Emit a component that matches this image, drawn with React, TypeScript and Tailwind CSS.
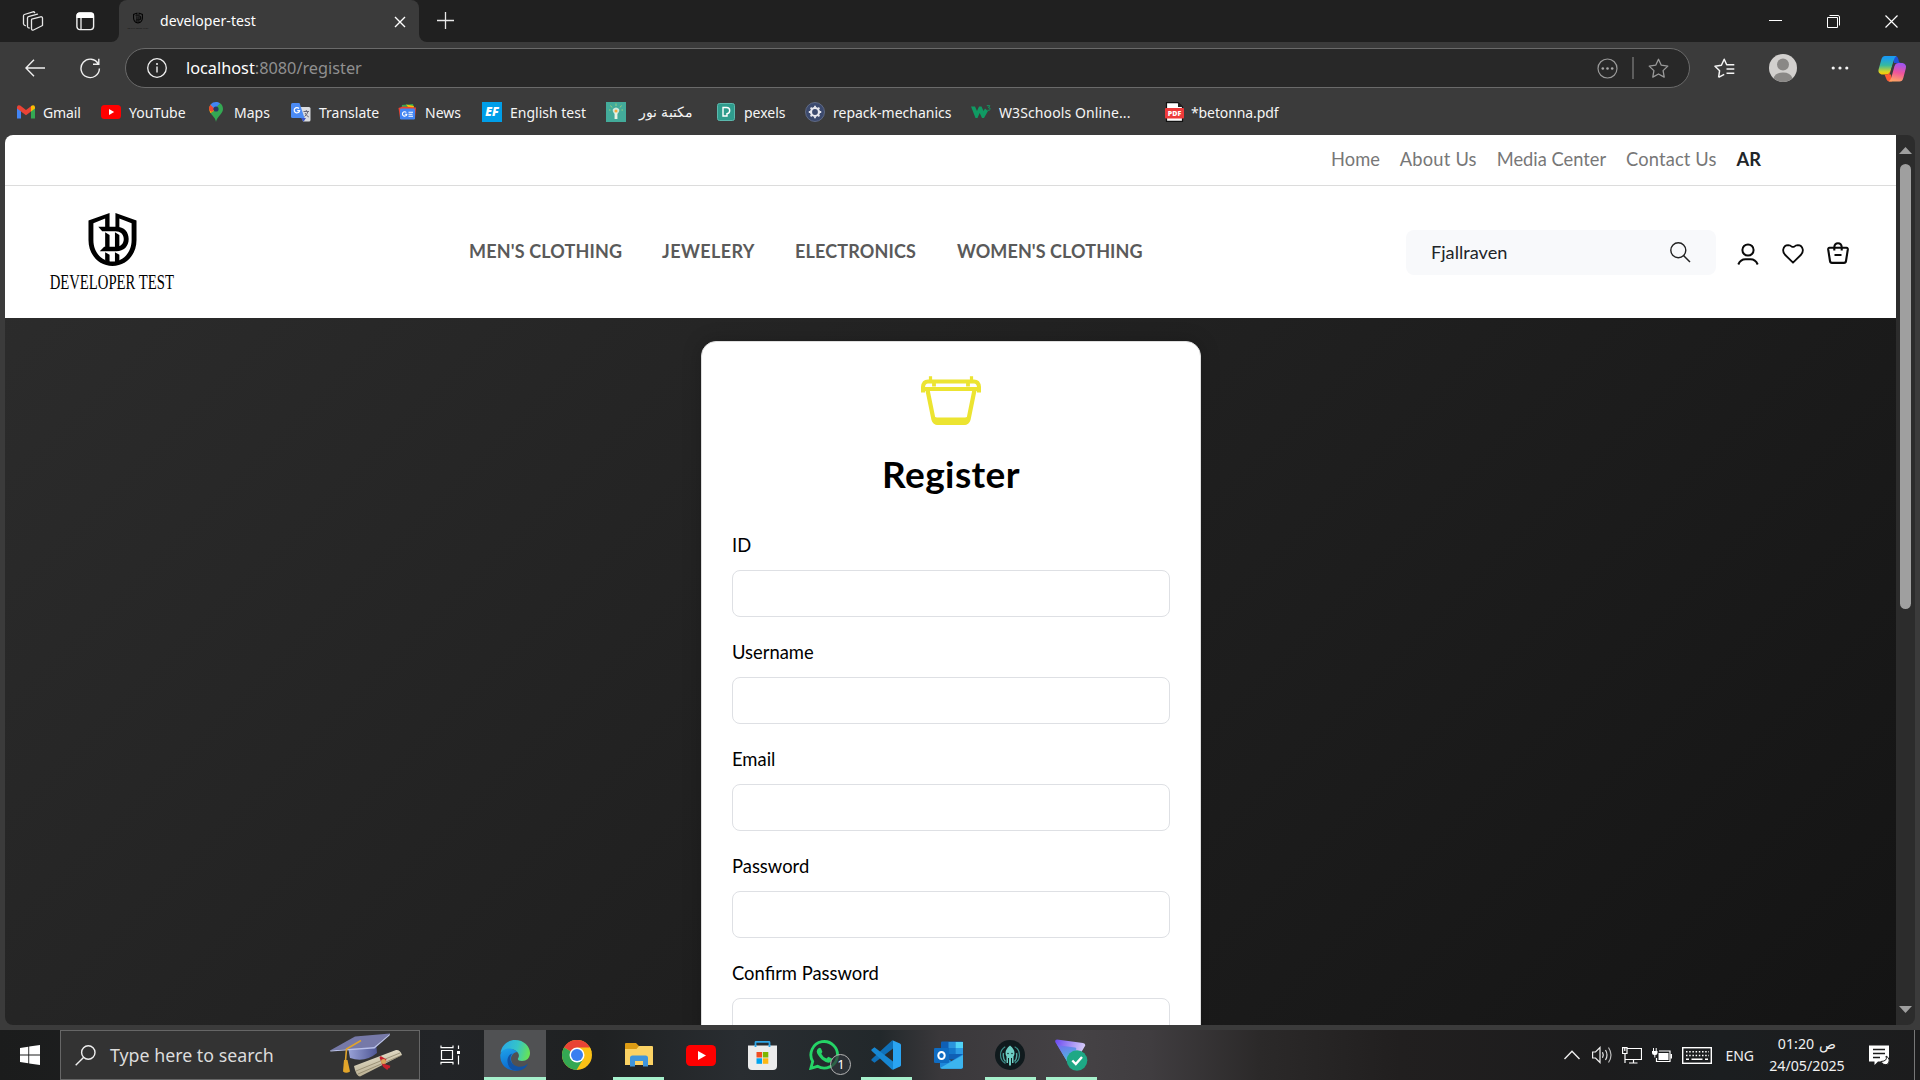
import type { ReactNode } from "react";

function Svg({ w, h, vb, className = "", children }: { w: number; h: number; vb?: string; className?: string; children: ReactNode }) {
  return (
    <svg width={w} height={h} viewBox={vb ?? `0 0 ${w} ${h}`} fill="none" className={`shrink-0 ${className}`}>
      {children}
    </svg>
  );
}

/* ---------- Browser tab strip ---------- */

function Shield({ w, h }: { w: number; h: number }) {
  return (
    <Svg w={w} h={h} vb="0 0 50 55">
      <path d="M22 0.5 L0.5 8 V28 C0.5 43 11 54.5 25 54.5 C39 54.5 49.5 43 49.5 28 V8 L28 0.5 V15 H32 V6 L44.5 11 V28 C44.5 40.5 36 50 25 50 C14 50 5.500 40.500 5.500 28 V11 L17.500 6 V15 H22 Z" fill="#000" />
      <path d="M10.500 14.500 H29 C37 14.500 41.500 20 41.500 27 C41.500 34.500 36.500 39.500 29 39.500 H12 L16.500 35 H28 C33 35 36.500 32 36.500 27 C36.500 22 33 19 28 19 H14.500 Z" fill="#000" />
      <path d="M17.500 20 L22 23 V36 H17.500 Z M27.500 20 L32 23 V36 H27.500 Z M17.500 40.500 L22 43 V51 L17.500 49 Z M27.500 40.500 L32 43 V49.500 L27.500 51 Z" fill="#000" />
    </Svg>
  );
}

function TabStrip() {
  return (
    <div className="flex h-[42px] shrink-0 bg-[#3b3b3b] text-white">
      <div className="flex w-[119px] items-center rounded-br-lg bg-[#202020] pl-[22px]">
        <Svg w={22} h={22} className="mr-[32px]">
          <g stroke="#e6e6e6" strokeWidth="1.3" strokeLinejoin="round" strokeLinecap="round">
            <path d="M9.800 9.200 L18.500 6.800 Q20.500 6.500 20.500 8.200 V15.500 L11.500 20 Q9.600 20.600 9.500 18.800 V10 Q9.500 9.300 9.800 9.200Z" />
            <path d="M7.200 18 Q5.600 18 5.500 16.500 V8 Q5.500 7 6.400 6.700 L15.500 4.200" />
            <path d="M3.300 15.600 Q1.600 15.300 1.500 13.800 V5.800 Q1.500 4.800 2.400 4.500 L11 1.800 Q12.300 1.600 12.700 2.700" />
          </g>
        </Svg>
        <Svg w={19} h={19}>
          <rect x="0.900" y="0.900" width="16.700" height="16.700" rx="3" stroke="#f0f0f0" strokeWidth="1.400" />
          <path d="M0.500 6 V3.500 Q0.500 0.500 3.500 0.500 H15 Q18 0.500 18 3.500 V6Z" fill="#fff" />
          <path d="M5 6 V17.500" stroke="#f0f0f0" strokeWidth="1.300" />
        </Svg>
      </div>
      <div className="w-[300px] bg-[#202020]">
        <div className="flex h-full items-center rounded-t-lg bg-[#3b3b3b] pl-[9px] pr-[13px]">
          <div className="flex w-[20px] flex-col items-center gap-[2px]">
            <Shield w={10} h={14} />
            <span className="whitespace-nowrap font-['Liberation_Serif'] text-[2.500px] leading-[4px] text-black">DEVELOPER TEST</span>
          </div>
          <span className="ml-[12px] flex-1 font-['Noto_Sans'] text-[14px] leading-[18px] tracking-[0.080px]">developer-test</span>
          <Svg w={12} h={12} className="mt-[1px]">
            <path d="M1 1 L11 11 M11 1 L1 11" stroke="#fff" strokeWidth="1.400" />
          </Svg>
        </div>
      </div>
      <div className="flex flex-1 rounded-bl-lg bg-[#202020]">
        <Svg w={18} h={18} className="ml-[18px] mt-[12px]">
          <path d="M8.500 0 V17 M0 8.500 H17" stroke="#e8e8e8" strokeWidth="1.300" />
        </Svg>
        <div className="ml-auto flex items-start pr-[22px] pt-[15px]">
          <Svg w={13} h={13}>
            <path d="M0 5.500 H13" stroke="#fff" />
          </Svg>
          <Svg w={14} h={14} className="ml-[45px]">
            <path d="M0.500 2.500 H10.500 V12.500 H0.500Z" stroke="#fff" />
            <path d="M2.500 0.500 H11 Q12.500 0.500 12.500 2 V10.500" stroke="#fff" />
          </Svg>
          <Svg w={13} h={13} className="ml-[44px]">
            <path d="M0.500 0.500 L12.500 12.500 M12.500 0.500 L0.500 12.500" stroke="#fff" strokeWidth="1.200" />
          </Svg>
        </div>
      </div>
    </div>
  );
}

/* ---------- Address bar ---------- */

function Toolbar() {
  return (
    <div className="flex h-[52px] shrink-0 items-center bg-[#3b3b3b]">
      <Svg w={20} h={18} className="ml-[25px]">
        <path d="M9 0.800 L0.900 9 L9 17.200 M1 9 H20" stroke="#f0f0f0" strokeWidth="1.400" />
      </Svg>
      <Svg w={21} h={21} className="ml-[35px]">
        <path d="M18.300 6 A9.200 9.200 0 1 0 19.400 10.500 M18.800 0.800 V6.300 H13" stroke="#f0f0f0" strokeWidth="1.400" />
      </Svg>
      <div className="ml-[24px] flex h-[40px] w-[1565px] items-center rounded-full border border-[#6a6a6a] bg-[#282828]">
        <Svg w={20} h={20} className="ml-[21px]">
          <circle cx="10" cy="10" r="9.300" stroke="#f0f0f0" strokeWidth="1.300" />
          <path d="M10 8.500 V14.500" stroke="#f0f0f0" strokeWidth="1.400" />
          <circle cx="10" cy="6" r="1" fill="#f0f0f0" />
        </Svg>
        <span className="ml-[19px] flex-1 font-['Noto_Sans'] text-[16.300px] text-[#909090]">
          <span className="text-white">localhost</span>:8080/register
        </span>
        <Svg w={21} h={21}>
          <circle cx="10.500" cy="10.500" r="9.500" stroke="#9a9a9a" strokeWidth="1.200" />
          <g fill="#a8a8a8">
            <circle cx="5.800" cy="10.500" r="1.300" />
            <circle cx="10.500" cy="10.500" r="1.300" />
            <circle cx="15.200" cy="10.500" r="1.300" />
          </g>
        </Svg>
        <div className="ml-[14px] h-[22px] w-[2px] bg-[#5d5d5d]" />
        <Svg w={21} h={21} className="ml-[14px] mr-[20px]">
          <path d="M10.500 1.300 L13.300 7.200 L19.800 8.100 L15.100 12.600 L16.200 19.100 L10.500 16 L4.800 19.100 L5.900 12.600 L1.200 8.100 L7.700 7.200Z" stroke="#9a9a9a" strokeWidth="1.300" strokeLinejoin="round" />
        </Svg>
      </div>
      <Svg w={21} h={21} className="ml-[24px]">
        <path d="M4.600 19.300 L5.600 12.700 L1 8.200 L7.400 7.200 L10.200 1.300 L12.700 6.800 H20.300 M4.600 19.300 L10.200 16.400 M12.500 11 H20.300 M12.500 15.200 H20.300" stroke="#f5f5f5" strokeWidth="1.500" strokeLinejoin="round" />
      </Svg>
      <Svg w={28} h={28} className="ml-[34px]">
        <circle cx="14" cy="14" r="14" fill="#d2d0ce" />
        <circle cx="14" cy="10.500" r="6" fill="#8a8886" />
        <path d="M4.500 24.200 Q6.500 18.500 14 18.500 Q21.500 18.500 23.500 24.200 Q19.500 28 14 28 Q8.500 28 4.500 24.200Z" fill="#8a8886" />
      </Svg>
      <Svg w={18} h={4} className="ml-[34px]">
        <circle cx="2.200" cy="2" r="1.600" fill="#f5f5f5" />
        <circle cx="9" cy="2" r="1.600" fill="#f5f5f5" />
        <circle cx="15.800" cy="2" r="1.600" fill="#f5f5f5" />
      </Svg>
      <Svg w={29} h={27} className="ml-[29px]">
        <defs>
          <linearGradient id="cpL" x1="0" y1="0" x2="0" y2="1">
            <stop offset="0.100" stopColor="#1a9bf0" />
            <stop offset="0.500" stopColor="#35b9a0" />
            <stop offset="0.850" stopColor="#d8d424" />
            <stop offset="1" stopColor="#ffc800" />
          </linearGradient>
          <linearGradient id="cpR" x1="0.500" y1="0" x2="0.300" y2="1">
            <stop offset="0" stopColor="#a054f0" />
            <stop offset="0.500" stopColor="#f0559a" />
            <stop offset="1" stopColor="#ffa763" />
          </linearGradient>
        </defs>
        <path d="M15 1 H17 Q19.500 1 20.300 4 L21 7 Q22 8 24 8 H16Z" fill="#2051d8" />
        <path d="M7 1 H18.500 Q16.500 2 15.500 6 L12.500 16.500 Q11.300 19.500 8.500 19.500 H3.500 Q-0.500 18 0.700 14 L3.500 4 Q4.500 1 7 1Z" fill="url(#cpL)" />
        <path d="M6.500 19.500 H8.500 Q11 19.500 12.500 15.500 L14 26.500 H11.500 Q9 26.500 8.200 23.500Z" fill="#ff5a34" />
        <path d="M20.500 8 H24.500 Q29 9 27.800 13.500 L25.300 23 Q24.500 26.500 21.500 26.500 H10.500 Q12.500 25.500 13.500 22 L16.500 11 Q17.500 8 20.500 8Z" fill="url(#cpR)" />
        <path d="M14.800 9.500 H17 Q15.800 10.500 15.200 13 L13.300 19.500 H11.500Z" fill="#3b3b3b" />
      </Svg>
    </div>
  );
}

/* ---------- Bookmarks ---------- */

const bookmarks: { label: string; cell: string; icon: ReactNode; text?: string }[] = [
  {
    label: "Gmail",
    cell: "w-[85px]",
    text: "-ml-px tracking-[-0.100px]",
    icon: (
      <Svg w={18} h={14} vb="0 0 18 14">
        <path d="M0 2 V13.500 H4 V5.500 L0 2.500Z" fill="#4285f4" />
        <path d="M14 5.500 V13.500 H18 V2 L14 5Z" fill="#34a853" />
        <path d="M14 1.200 V6.500 L18 3.500 V2 Q17.500 -0.800 14.800 0.600Z" fill="#fbbc04" />
        <path d="M0 2 Q0.500 -0.800 3.200 0.600 L9 5 L14 1.200 V6.500 L9 10.200 L4 6.500 L0 3.500Z" fill="#ea4335" />
      </Svg>
    ),
  },
  {
    label: "YouTube",
    cell: "w-[105px]",
    icon: (
      <Svg w={20} h={14}>
        <rect width="20" height="14" rx="3.500" fill="#f00" />
        <path d="M8 4 L13.200 7 L8 10Z" fill="#fff" />
      </Svg>
    ),
  },
  {
    label: "Maps",
    cell: "w-[85px]",
    icon: (
      <Svg w={14} h={20}>
        <path d="M7 20 C6.500 16 4 14.500 1.800 11.500 L10.500 1 C13 2.200 14 4.500 14 7 C14 12 8 14.500 7 20Z" fill="#34a853" />
        <path d="M1.600 11.300 C-0.500 8 0 4.500 1.800 2.500 L8 6.500Z" fill="#fbbc04" />
        <path d="M1.500 2.700 L6 6.500 L3 10 Q0 9 0 7 Q0 4.500 1.500 2.700Z" fill="#ea4335" />
        <path d="M1.500 2.700 C4 -0.500 8.500 -0.500 11 1.300 L5.800 7Z" fill="#4285f4" />
        <circle cx="7" cy="7" r="2.600" fill="#263a66" />
      </Svg>
    ),
  },
  {
    label: "Translate",
    cell: "w-[106px]",
    icon: (
      <Svg w={20} h={19}>
        <path d="M8 4 H18 Q19.500 4 19.500 5.500 V17 Q19.500 18.500 18 18.500 H12Z" fill="#dadce0" />
        <path d="M10 15 L12.500 18.800 L15 15Z" fill="#3a55c8" />
        <path d="M1.500 0 H8.500 L13.500 15 H1.500 Q0 15 0 13.500 V1.500 Q0 0 1.500 0Z" fill="#4b8bf5" />
        <path d="M12.500 8.500 H18 M15.300 7 V8.500 M17 8.500 Q16 12 13.500 13.500 M14 10 Q15.500 13 17.800 14" stroke="#667" strokeWidth="1" />
        <path d="M8 5.500 A2.700 2.700 0 1 0 8.600 7.600 H6.200" stroke="#fff" strokeWidth="1.200" />
      </Svg>
    ),
  },
  {
    label: "News",
    cell: "w-[85px]",
    icon: (
      <Svg w={19} h={16}>
        <path d="M4 1 L15 0 L17 8 H3Z" fill="#34a853" />
        <path d="M8 0.500 L16 2 L14 8Z" fill="#fbbc04" />
        <path d="M0.500 4 L5 2.500 L18 3.500 L17 14 H2Z" fill="#ea4335" />
        <rect x="2" y="4.500" width="15" height="11" rx="1.200" fill="#4285f4" />
        <path d="M8.300 8.500 A2.200 2.200 0 1 0 8.800 10.300 H6.800 M10.500 8.300 H15 M10.500 10.300 H14.500 M10.500 12.300 H15" stroke="#fff" strokeWidth="1.100" />
      </Svg>
    ),
  },
  {
    label: "English test",
    cell: "w-[124px]",
    icon: (
      <div className="flex size-5 items-center justify-center bg-[#009ee8] font-['Open_Sans'] text-[12px] font-extrabold italic leading-none text-white">EF</div>
    ),
  },
  {
    label: "مكتبة نور",
    cell: "w-[110px]",
    text: "ml-[5px] text-[14.400px] leading-[18px] tracking-normal",
    icon: (
      <Svg w={20} h={20}>
        <rect width="20" height="20" fill="#43ab9a" />
        <path d="M7 7 Q10 4 13 7 Q14 9 11.500 12 V17 H8.500 V12 Q6 9 7 7Z" fill="#cfe9dc" />
        <path d="M10 17 V9" stroke="#f2f4ea" strokeWidth="1.500" />
        <circle cx="10" cy="9" r="1.500" fill="#f5a83a" />
        <path d="M10 1.500 V4 M4.500 3.500 L6 5.500 M15.500 3.500 L14 5.500 M3 8 H4.500 M15.500 8 H17" stroke="#9bd07d" />
      </Svg>
    ),
  },
  {
    label: "pexels",
    cell: "w-[89px]",
    icon: (
      <Svg w={18} h={18}>
        <rect x="0.500" y="0.500" width="17" height="17" rx="2" fill="#2f9c8d" stroke="#5cb8ad" />
        <path d="M6 4.500 H9.500 Q12.700 4.500 12.700 7.500 Q12.700 10.300 10 10.600 V13 H6Z" stroke="#fff" strokeWidth="1.400" />
      </Svg>
    ),
  },
  {
    label: "repack-mechanics",
    cell: "w-[166px]",
    icon: (
      <Svg w={20} h={20}>
        <circle cx="10" cy="10" r="9.500" fill="#3c4a6e" stroke="#68738f" strokeWidth="0.800" />
        <circle cx="10" cy="10" r="4" stroke="#e8e8ee" strokeWidth="2.200" />
        <path d="M10 3.800 V5.500 M10 14.500 V16.200 M3.800 10 H5.500 M14.500 10 H16.200 M5.600 5.600 L6.800 6.800 M13.200 13.200 L14.400 14.400 M5.600 14.400 L6.800 13.200 M13.200 6.800 L14.400 5.600" stroke="#e8e8ee" strokeWidth="1.800" />
      </Svg>
    ),
  },
  {
    label: "W3Schools Online...",
    cell: "w-[193px]",
    text: "tracking-[0.100px]",
    icon: (
      <Svg w={20} h={14}>
        <path d="M0 1.500 H4 L6 6 L8 1.500 H10.500 L12.500 6 L14 3.500 L17 6 L13 13 H11 L8.700 8 L6.500 13 H4.500Z" fill="#109a63" />
        <path d="M15.800 0.700 H18.800 L17.500 2.700 Q19.500 2.800 19.200 4.300 Q18.500 5.800 16.500 5.200" stroke="#109a63" />
      </Svg>
    ),
  },
  {
    label: "*betonna.pdf",
    cell: "w-[130px]",
    text: "-ml-px tracking-[-0.100px]",
    icon: (
      <Svg w={19} h={20}>
        <path d="M1.500 0.700 H13 L17.500 5 V19.300 H1.500Z" fill="#fff" stroke="#111" strokeWidth="1.200" />
        <path d="M13 0.700 V5 H17.500" fill="#222" />
        <rect x="0" y="6" width="19" height="10.500" rx="1" fill="#ee3a3a" />
        <text x="9.500" y="13.700" textAnchor="middle" fontSize="7" fontWeight="800" fontFamily="Open Sans, sans-serif" fill="#fff">PDF</text>
      </Svg>
    ),
  },
];

function Bookmarks() {
  return (
    <div className="flex h-[41px] shrink-0 items-center bg-[#3b3b3b] pb-[5px] pl-[16px] font-['Noto_Sans'] text-[14px] text-[#f5f5f5]">
      {bookmarks.map((b) => (
        <div key={b.label} className={`flex shrink-0 items-center gap-2 whitespace-nowrap ${b.cell}`}>
          <div className="flex w-5 shrink-0 justify-center">{b.icon}</div>
          <span className={b.text ?? "tracking-normal"}>{b.label}</span>
        </div>
      ))}
    </div>
  );
}

/* ---------- Shop page ---------- */

function TopLinks() {
  return (
    <div className="flex h-[51px] shrink-0 items-center justify-end gap-[20px] border-b border-[#dcdcdc] bg-white pr-[135px] text-[18.300px] text-[#777]">
      <span>Home</span>
      <span className="tracking-[0.200px]">About Us</span>
      <span>Media Center</span>
      <span className="tracking-[0.150px]">Contact Us</span>
      <span className="font-bold text-[#212529]">AR</span>
    </div>
  );
}

function ShopHeader() {
  return (
    <div className="flex h-[132px] shrink-0 items-center bg-white">
      <div className="ml-[44px] flex w-[126px] flex-col items-center">
        <Shield w={49} h={55} />
        <span className="mt-[4px] origin-center scale-x-[0.700] whitespace-nowrap font-['Liberation_Serif'] text-[21px] leading-[22px] text-black">DEVELOPER TEST</span>
      </div>
      <nav className="-mt-px ml-[294px] flex text-[18px] font-bold tracking-[0.150px] text-[#5a5a5a]">
        <span className="w-[193px]">MEN'S CLOTHING</span>
        <span className="w-[133px] tracking-[0.400px]">JEWELERY</span>
        <span className="w-[162px]">ELECTRONICS</span>
        <span className="tracking-[0.080px]">WOMEN'S CLOTHING</span>
      </nav>
      <div className="ml-auto flex items-center pr-[47px]">
        <div className="mr-[21px] flex h-[45px] w-[310px] items-center justify-between rounded-lg bg-[#f8f9fb] pl-[25px] pr-[25px]">
          <span className="text-[18.200px] leading-[24px] text-[#212529]">Fjallraven</span>
          <Svg w={21} h={21}>
            <circle cx="8.300" cy="8.300" r="7.500" stroke="#222" strokeWidth="1.400" />
            <path d="M13.500 13.500 L20 20" stroke="#222" strokeWidth="1.500" />
          </Svg>
        </div>
        <Svg w={22} h={22} className="mt-[3px]">
          <circle cx="11" cy="7" r="5.600" stroke="#0a0a0a" strokeWidth="2" />
          <path d="M1.300 21.500 Q3.500 16.300 8.500 16.300 H13.500 Q18.500 16.300 20.700 21.500" stroke="#0a0a0a" strokeWidth="2" />
        </Svg>
        <Svg w={22} h={20} className="ml-[23px] mt-[3px]">
          <path d="M11 18.700 L2.800 10.500 Q0.900 8.200 1.200 5.700 Q2 1.300 6.200 1.200 Q8.300 1.200 9.500 2.500 Q11 3.400 12.500 2.500 Q13.700 1.200 15.800 1.200 Q20 1.300 20.800 5.700 Q21.100 8.200 19.200 10.500Z" stroke="#0a0a0a" strokeWidth="1.800" strokeLinejoin="round" />
        </Svg>
        <Svg w={22} h={22} className="ml-[23px] mt-[2px]">
          <path d="M2.500 5.800 H19.500 Q21 5.900 20.800 7.500 L19 19 Q18.700 20.900 17 20.900 H5 Q3.300 20.900 3 19 L1.200 7.500 Q1 5.900 2.500 5.800Z M7.300 8.500 V5 Q7.600 1.200 11 1.200 Q14.400 1.200 14.700 5 V8.500 M7.500 13 H14.500" stroke="#0a0a0a" strokeWidth="2.100" />
        </Svg>
      </div>
    </div>
  );
}

function Basket() {
  return (
    <Svg w={60} h={50}>
      <g stroke="#ece431">
        <path d="M2 16.500 V11 Q2.500 5.500 7 5.500 H53 Q57.500 5.500 58 11 V16.500" strokeWidth="4" />
        <path d="M0.300 13 H59.700" strokeWidth="4" />
        <path d="M9.500 0.300 V5 M50.500 0.300 V5" strokeWidth="3.200" />
        <path d="M13 5.500 V10.500 M47 5.500 V10.500" strokeWidth="3.800" />
        <path d="M6.500 14 L12.500 43.500 Q13.500 47 17 47 H43 Q46.500 47 47.500 43.500 L53.500 14" strokeWidth="4.200" />
      </g>
      <path d="M12.500 39 Q13.500 41.500 16 41.500 H44 Q46.500 41.500 47.500 39 L48 44 Q47 48.800 43 48.800 H17 Q13 48.800 12 44Z" fill="#ece431" />
    </Svg>
  );
}

function RegisterCard() {
  return (
    <div className="mt-[23px] ml-[696px] h-[800px] w-[500px] shrink-0 rounded-[15px] border border-[#dedede] bg-white px-[30px] text-black shadow-[0_0_20px_rgba(0,0,0,0.200)]">
      <div className="flex justify-center pt-[34px]">
        <Basket />
      </div>
      <h1 className="mt-[26px] text-center text-[37px] font-bold leading-[44px] tracking-[0.400px]">Register</h1>
      <div className="mt-[38px] flex flex-col">
        {["ID", "Username", "Email", "Password", "Confirm Password"].map((label) => (
          <label key={label} className="flex h-[107px] flex-col">
            <span className="h-[36px] text-[18.400px] leading-[23px]">{label}</span>
            <span className="h-[47px] rounded-lg border border-[#dee0e4] bg-white" />
          </label>
        ))}
      </div>
    </div>
  );
}

function Scrollbar() {
  return (
    <div className="flex w-[19px] flex-col items-center rounded-tr-lg rounded-br-lg bg-[#2c2c2c]">
      <Svg w={13} h={7} className="mt-[12px]">
        <path d="M6.500 0 L13 7 H0Z" fill="#9f9f9f" />
      </Svg>
      <div className="mt-[10px] h-[445px] w-[11px] rounded-full bg-[#9f9f9f]" />
      <Svg w={13} h={7} className="mb-[12px] mt-auto">
        <path d="M6.500 7 L13 0 H0Z" fill="#9f9f9f" />
      </Svg>
    </div>
  );
}

/* ---------- Windows taskbar ---------- */

function SearchBox() {
  return (
    <div className="flex w-[360px] items-center border border-[#666] bg-[#333] pl-[14px]">
      <Svg w={21} h={21}>
        <circle cx="13.300" cy="7.500" r="6.700" stroke="#f0f0f0" strokeWidth="1.400" />
        <path d="M8.500 12.500 L0.700 20.300" stroke="#f0f0f0" strokeWidth="1.400" />
      </Svg>
      <span className="ml-[14px] w-[220px] font-['Noto_Sans'] text-[17.800px] text-[#dcdcdc]">Type here to search</span>
      <Svg w={74} h={45}>
        <defs>
          <linearGradient id="scroll" x1="0" y1="0" x2="0.400" y2="1">
            <stop offset="0" stopColor="#f3efdc" />
            <stop offset="1" stopColor="#b3a88a" />
          </linearGradient>
          <linearGradient id="cap" x1="0" y1="0" x2="1" y2="0">
            <stop offset="0" stopColor="#9aa3d8" />
            <stop offset="1" stopColor="#4f5795" />
          </linearGradient>
        </defs>
        <path d="M18 14 L46 10 L47 20 Q35 30 20 25Z" fill="url(#cap)" />
        <path d="M0 17.500 L25 3.500 L60 0.500 L44 14Z" fill="#7679a8" />
        <path d="M0 17.500 L44 14 L60 0.500 L59.500 2.500 L44.500 15.500 L0.500 18.500Z" fill="#b9c0ea" />
        <path d="M31 7.500 L16.500 16 L15.500 28" stroke="#e0a32c" strokeWidth="1.600" />
        <path d="M14 27 H17.500 L20 38.500 Q16 41 13 38.500Z" fill="#e3a52a" />
        <path d="M24 33 L66 17 Q70 16.500 72 22 L30 43.500 Q26 43 24 33Z" fill="url(#scroll)" />
        <path d="M26 38 L70 20 M28 41 L71 22.500" stroke="#877c62" strokeWidth="0.700" />
        <path d="M50 24 L55 27 L53 32 M51 25 L54 33 L58 36 M53 32 L60 34" stroke="#c8202c" strokeWidth="2.400" />
        <circle cx="53.500" cy="28.500" r="2.500" fill="#d9a65a" />
      </Svg>
    </div>
  );
}

const EdgeIcon = (
  <Svg w={30} h={32}>
    <defs>
      <linearGradient id="edgeTop" x1="0" y1="0.300" x2="1" y2="0.500">
        <stop offset="0" stopColor="#28a8e8" />
        <stop offset="0.550" stopColor="#35c4c8" />
        <stop offset="1" stopColor="#66e356" />
      </linearGradient>
      <linearGradient id="edgeLeft" x1="0" y1="0" x2="0.300" y2="1">
        <stop offset="0" stopColor="#1fa3ea" />
        <stop offset="1" stopColor="#0a69cf" />
      </linearGradient>
    </defs>
    <path d="M0.500 14 C1.500 6 8 1 15 1 C24 1 30 7.500 30 14 C30 19 26.500 22 22 22 C18 22 17 20.500 18.500 18.500 C20.500 14 15 10 10 10 C5 10 1.500 13 0.500 14Z" fill="url(#edgeTop)" />
    <path d="M0.300 16 C1 11 6 9 10 9.500 C14 10 17.500 13 17.500 13 C13 13.500 11 16.500 11 20 C11 25 16 30 21 29.500 C19 31.500 16 32 14 31.500 C6 31 0 25 0.300 16Z" fill="url(#edgeLeft)" />
    <path d="M12.500 14.500 C9.500 17.500 9.500 23 14 26 C18.500 29 24 28 28 24.500 C26 29.500 21 32.500 15.500 31.500 C9.500 31 7 25 7.500 20.500 C8 17 10 15 12.500 14.500Z" fill="#1253a4" />
  </Svg>
);

const ChromeIcon = (
  <Svg w={30} h={30}>
    <circle cx="15" cy="15" r="15" fill="#fbc116" />
    <path d="M15 15 L2 7.500 A15 15 0 0 1 28 7.500 Z" fill="#e94335" />
    <path d="M15 15 L2 7.500 A15 15 0 0 0 14.500 30 L21.500 18.500 Z" fill="#34a853" />
    <path d="M15 7.500 H28 A15 15 0 0 1 29.500 12 L22 12Z" fill="#fbc116" />
    <circle cx="15" cy="15" r="7.500" fill="#fff" />
    <circle cx="15" cy="15" r="6" fill="#3a7ff0" />
  </Svg>
);

const FolderIcon = (
  <Svg w={28} h={24}>
    <path d="M0 1 Q0 0 1 0 H11 L14 3 H27 V8 H0Z" fill="#dd9c14" />
    <path d="M0 6 H11.500 L14 3 H27 Q28 3 28 4 V22 H0Z" fill="#fbd264" />
    <path d="M5 23.500 V15 Q5 12.500 7.500 12.500 H20.500 Q23 12.500 23 15 V23.500 H18 V18 H10 V23.500Z" fill="#3f95dc" />
  </Svg>
);

const YoutubeIcon = (
  <Svg w={30} h={21}>
    <rect width="30" height="21" rx="4.500" fill="#f00" />
    <path d="M12 6 L20 10.500 L12 15Z" fill="#fff" />
  </Svg>
);

const StoreIcon = (
  <Svg w={29} h={29}>
    <path d="M7.500 6 V1.500 Q7.500 0.800 8.500 0.800 H20.500 Q21.500 0.800 21.500 1.500 V6" stroke="#2fa5e6" strokeWidth="1.800" />
    <path d="M0 4.500 H29 V25 Q29 29 25 29 H4 Q0 29 0 25Z" fill="#ececec" />
    <path d="M7.500 4 V6 M21.500 4 V6" stroke="#2fa5e6" strokeWidth="1.800" />
    <rect x="8.500" y="11" width="5.500" height="5.500" fill="#f04e23" />
    <rect x="14.800" y="11" width="5.500" height="5.500" fill="#7db700" />
    <rect x="8.500" y="17.300" width="5.500" height="5.500" fill="#00a3ee" />
    <rect x="14.800" y="17.300" width="5.500" height="5.500" fill="#fdb813" />
  </Svg>
);

const WhatsappIcon = (
  <div className="relative">
    <Svg w={30} h={30}>
      <path d="M1.800 28.300 L3.700 21.500 A13.300 13.300 0 1 1 8.500 26.300Z" stroke="#25d366" strokeWidth="2.800" />
      <path d="M9.500 8.300 Q11 7.300 12 8.500 L13.300 11.500 Q13.500 12.500 12.300 13.800 Q14 17.300 17.500 18.500 L19.300 16.700 L23 18.600 Q23.200 21.500 20.500 22.500 Q17.500 23.300 12.800 19.500 Q8 14.500 7.700 11.500 Q7.700 9.500 9.500 8.300Z" fill="#25d366" />
    </Svg>
    <div className="absolute left-[21px] top-[14px] flex size-[21px] items-center justify-center rounded-full border border-[#b5b5b5] bg-[#30343a]/70 font-['Noto_Sans'] text-[13px] text-white">1</div>
  </div>
);

const CodeIcon = (
  <Svg w={30} h={30}>
    <path d="M22 0.500 L29 3.500 Q30 4 30 5 V25 Q30 26 29 26.500 L22 29.800Z" fill="#2aa4f2" />
    <path d="M22 0.300 V8.500 L3.500 22.800 L0.500 20.500 Q0 19.500 0.800 19 L21 0.500Z" fill="#0f70b8" />
    <path d="M22 29.700 V21.500 L3.500 7.200 L0.500 9.500 Q0 10.500 0.800 11 L21 29.500Z" fill="#1787d2" />
  </Svg>
);

const OutlookIcon = (
  <Svg w={29} h={28}>
    <rect x="7" y="0.500" width="22" height="18" rx="1" fill="#0f5fb5" />
    <rect x="14.500" y="1" width="7" height="6" fill="#2a93dd" />
    <rect x="21.500" y="1" width="7.500" height="6" fill="#50d2f6" />
    <rect x="14.500" y="7" width="7" height="6" fill="#1478cc" />
    <rect x="21.500" y="7" width="7.500" height="6" fill="#2c9be4" />
    <path d="M6 13 L17.500 20 L29 13 V26 Q29 27.800 27 27.800 H8 Q6 27.800 6 26Z" fill="#1c86da" />
    <path d="M6 27 L29 14 V26 Q29 27.800 27 27.800 H8Z" fill="#3cb4ee" />
    <rect x="0" y="7" width="15" height="15" rx="1.200" fill="#0f6cc2" />
    <ellipse cx="7.500" cy="14.500" rx="3.200" ry="3.600" stroke="#fff" strokeWidth="2" />
  </Svg>
);

const KrakenIcon = (
  <Svg w={30} h={30}>
    <circle cx="15" cy="15" r="15" fill="#101a1d" />
    <circle cx="15" cy="15" r="9.500" stroke="#3c8d89" strokeWidth="1.200" strokeDasharray="20 9.845" strokeDashoffset="-19.500" />
    <path d="M15 5.500 Q19.500 9 19.500 13 Q19.500 15.500 18.500 16.500 V23 H17 V18 H16 V25.500 H14 V18 H13 V23 H11.500 V16.500 Q10.500 15.500 10.500 13 Q10.500 9 15 5.500Z" fill="#6fd0c5" />
    <path d="M8.500 13 Q7.500 18 10.500 21.500 M21.500 13 Q22.500 18 19.500 21.500" stroke="#4fa9a2" strokeWidth="1.400" />
    <circle cx="13" cy="13.500" r="0.800" fill="#12302f" />
    <circle cx="17" cy="13.500" r="0.800" fill="#12302f" />
  </Svg>
);

const VpnIcon = (
  <Svg w={33} h={32}>
    <defs>
      <linearGradient id="vpn" x1="0" y1="0" x2="1" y2="0.300">
        <stop offset="0" stopColor="#6a48f0" />
        <stop offset="1" stopColor="#d8cff8" />
      </linearGradient>
      <linearGradient id="vpnIn" x1="0" y1="0" x2="0.300" y2="1">
        <stop offset="0" stopColor="#7d5cf5" />
        <stop offset="1" stopColor="#48c3dc" />
      </linearGradient>
    </defs>
    <path d="M2 0.500 L28 4 Q31 4.500 30 7 L18 27 Q16 29 14.500 26.500 L0.300 3 Q-0.300 0.500 2 0.500Z" fill="url(#vpn)" />
    <path d="M0.300 2.500 Q2 6 5 6.500 L20 8.500 Q22 9 21 11 L14.500 26.500Z" fill="url(#vpnIn)" />
    <circle cx="22" cy="21.500" r="10.300" fill="#1ea885" />
    <path d="M17.300 21.500 L20.800 25 L27 18" stroke="#fff" strokeWidth="2.400" />
  </Svg>
);

const apps: { name: string; icon: ReactNode; open?: boolean; active?: boolean }[] = [
  { name: "edge", icon: EdgeIcon, active: true },
  { name: "chrome", icon: ChromeIcon },
  { name: "explorer", icon: FolderIcon, open: true },
  { name: "youtube", icon: YoutubeIcon },
  { name: "store", icon: StoreIcon },
  { name: "whatsapp", icon: WhatsappIcon },
  { name: "code", icon: CodeIcon, open: true },
  { name: "outlook", icon: OutlookIcon },
  { name: "kraken", icon: KrakenIcon, open: true },
  { name: "vpn", icon: VpnIcon, open: true },
];

function Tray() {
  return (
    <div className="ml-auto flex items-center">
      <Svg w={16} h={10} className="mr-[12px]">
        <path d="M0.500 9 L8 1.300 L15.500 9" stroke="#eee" strokeWidth="1.400" />
      </Svg>
      <Svg w={21} h={18} className="mr-[9px]">
        <path d="M0.600 6 H3.500 L8 1.500 V16.500 L3.500 12 H0.600Z" stroke="#eee" strokeWidth="1.200" />
        <path d="M10.500 6.300 Q12 9 10.500 11.700" stroke="#eee" strokeWidth="1.200" />
        <path d="M13.500 4 Q16.500 9 13.500 14" stroke="#ddd" strokeWidth="1.200" />
        <path d="M16.500 1.500 Q21.500 9 16.500 16.500" stroke="#bbb" strokeWidth="1.200" />
      </Svg>
      <Svg w={20} h={17} className="mr-[10px]">
        <path d="M5 1.500 H19.500 V12.500 H3 M11.500 12.500 V16 M7 16 H15.500 M3 7 V16" stroke="#fff" strokeWidth="1.200" />
        <path d="M0.600 0.600 H5 V6.500 H0.600Z M2.800 1 V4" stroke="#fff" strokeWidth="1.200" />
      </Svg>
      <Svg w={20} h={15} className="mr-[10px]">
        <path d="M7 3 H18 V13.500 H4.500 V10" stroke="#fff" strokeWidth="1.200" />
        <rect x="6.500" y="5" width="10" height="7" fill="#fff" />
        <path d="M18.500 6 H20 V10.500 H18.500Z M0 3 H5.500 V5 Q5.500 7 3.300 7 V9.500 H2.300 V7 Q0 7 0 5Z M1 0 H2 V3 H1Z M3.700 0 H4.700 V3 H3.700Z" fill="#fff" />
      </Svg>
      <Svg w={30} h={17} className="mr-[13px]">
        <rect x="0.700" y="0.700" width="28.600" height="15.600" stroke="#fff" strokeWidth="1.400" />
        <path d="M4 4.700 H27 M4 8.500 H27" stroke="#fff" strokeWidth="1.400" strokeDasharray="1.500 1.700" />
        <path d="M4 12.300 H7 M9.500 12.300 H20.500 M23 12.300 H26" stroke="#fff" strokeWidth="1.400" />
      </Svg>
      <span className="mr-[15px] font-['Noto_Sans'] text-[14px] text-[#f0f0f0]">ENG</span>
      <div className="mr-[24px] flex w-[76px] flex-col items-center font-['Noto_Sans'] text-[14.200px] leading-[22.500px] text-[#f0f0f0]">
        <div className="flex gap-[5px]">
          <span>01:20</span>
          <span>ص</span>
        </div>
        <span>24/05/2025</span>
      </div>
      <Svg w={21} h={21} className="mr-[24px]">
        <path d="M0 0.500 H20 V16.500 H9 L5.500 20 V16.500 H0Z" fill="#fff" />
        <path d="M4 4.500 H16 M4 8.500 H16 M4 12.500 H11" stroke="#1c1c1c" strokeWidth="1.300" />
        <path d="M17 11 Q19 16 12 16.500 Q13.500 20 17 19.800 Q20.500 19 20.300 15 Q19.500 12 17 11Z" fill="#fff" stroke="#1c1c1c" strokeWidth="1" />
      </Svg>
      <div className="mr-[5px] h-[50px] w-px bg-[#777]" />
    </div>
  );
}

function Taskbar() {
  return (
    <div className="flex h-[50px] shrink-0 bg-[linear-gradient(90deg,#1b1c1c_0px,#222427_440px,#1f2122_600px,#292d31_740px,#22282b_880px,#3a383b_940px,#454245_1080px,#403d40_1150px,#2b2929_1260px,#211f1f_1400px,#1c1c1d_1600px,#1b1e20_1720px,#1c1c1d_1920px)]">
      <div className="flex w-[60px] items-center justify-center">
        <Svg w={20} h={20}>
          <path d="M0 3 L8.300 1.800 V9.600 H0Z M9.200 1.600 L20 0 V9.600 H9.200Z M0 10.500 H8.300 V18.300 L0 17.100Z M9.200 10.500 H20 V20 L9.200 18.500Z" fill="#fff" />
        </Svg>
      </div>
      <SearchBox />
      <div className="flex w-[64px] items-center pl-[20px]">
        <Svg w={21} h={20}>
          <path d="M1.500 5.500 H12.500 V14.500 H1.500Z M1 0.500 V2.700 H13 V0.500 M1 19.500 V17.300 H13 V19.500 M18.500 0.500 V4 M18.500 10.500 V19.500" stroke="#fff" strokeWidth="1.200" />
          <rect x="17" y="6" width="3" height="3" fill="#fff" />
        </Svg>
      </div>
      <div className="flex">
        {apps.map((a) => (
          <div key={a.name} className={`flex w-[61.900px] shrink-0 flex-col items-center ${a.active ? "bg-[#505153]" : ""}`}>
            <div className="flex h-[47px] items-center pt-[3px]">{a.icon}</div>
            {a.active && <div className="h-[3px] w-full bg-[#a6f0cc]" />}
            {a.open && <div className="h-[3px] w-[51px] bg-[#a6f0cc]" />}
          </div>
        ))}
      </div>
      <Tray />
    </div>
  );
}

export default function App() {
  return (
    <div className="flex h-[1080px] w-[1920px] flex-col overflow-hidden bg-[#3b3b3b] font-['Lato',sans-serif]">
      <TabStrip />
      <Toolbar />
      <Bookmarks />
      <div className="flex h-[890px] shrink-0 px-[5px]">
        <div className="flex w-[1891px] flex-col overflow-hidden rounded-bl-lg rounded-tl-lg bg-[linear-gradient(135deg,#2d2d2d,#141414)]">
          <TopLinks />
          <ShopHeader />
          <RegisterCard />
        </div>
        <Scrollbar />
      </div>
      <div className="h-[5px] shrink-0" />
      <Taskbar />
    </div>
  );
}
